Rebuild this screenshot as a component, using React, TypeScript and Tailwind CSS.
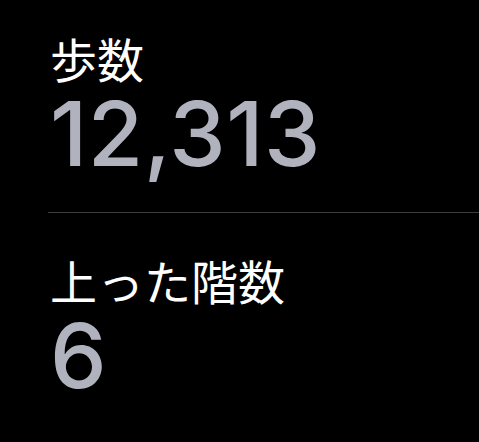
const stats = [
  { label: "歩数", value: "12,313" },
  { label: "上った階数", value: "6" },
];

function StatBlock({ label, value }: { label: string; value: string }) {
  return (
    <div className="pl-[50px]">
      <div className="text-[47px] leading-[40px] text-white font-['Noto_Sans_CJK_JP',sans-serif]">
        {label}
      </div>
      <div className="mt-[21px] text-[90px] leading-[70px] font-medium tracking-[0.5px] text-[#b0b3bd] font-['Inter',sans-serif]">
        {value}
      </div>
    </div>
  );
}

export default function App() {
  return (
    <div className="h-[442px] w-[479px] bg-black pt-[38px]">
      <StatBlock {...stats[0]} />
      <div className="ml-[48px] mt-[43px] h-px bg-[#3c3c3c]" />
      <div className="pt-[47px]">
        <StatBlock {...stats[1]} />
      </div>
    </div>
  );
}
